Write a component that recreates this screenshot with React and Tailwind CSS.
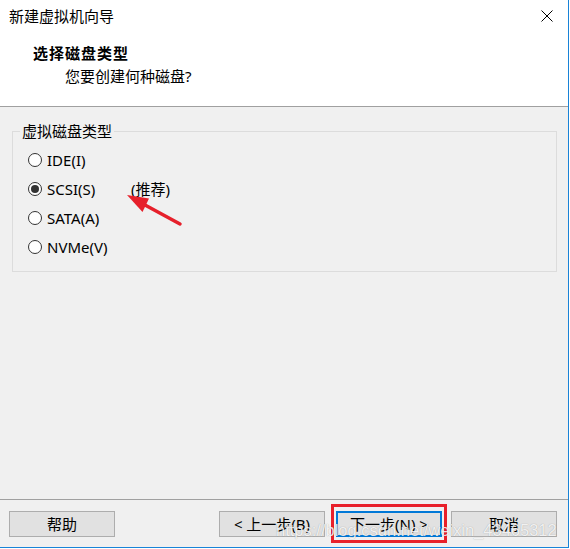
import { useState } from 'react';

const FONT = { fontFamily: '"Noto Sans", "Noto Sans CJK SC", sans-serif' };

const OPTIONS = [
  { id: 'ide', label: 'IDE(I)' },
  { id: 'scsi', label: 'SCSI(S)', note: '(推荐)' },
  { id: 'sata', label: 'SATA(A)' },
  { id: 'nvme', label: 'NVMe(V)' },
];

function Radio({ checked }) {
  return (
    <span className="flex h-[14px] w-[14px] items-center justify-center rounded-full border border-[#333] bg-white">
      {checked && <span className="h-[8px] w-[8px] rounded-full bg-[#333]" />}
    </span>
  );
}

function Button({ children, primary, className = '' }) {
  return (
    <button
      className={
        'flex h-[26px] w-[106px] items-center justify-center bg-[#e1e1e1] text-[15px] leading-none text-black ' +
        (primary ? 'border-2 border-[#0078d7] ' : 'border border-[#adadad] ') +
        className
      }
    >
      {children}
    </button>
  );
}

export default function App() {
  const [disk, setDisk] = useState('scsi');

  return (
    <div className="h-[549px] w-[570px] bg-white text-black" style={FONT}>
      <div className="relative flex h-[548px] w-[569px] flex-col border-r border-b border-[#1883d7]">
        {/* header */}
        <div className="h-[107px] border-b border-[#a0a0a0] bg-white">
          <div className="flex h-[32px] items-center justify-between pl-[9px] pr-[15px]">
            <span className="text-[15px] leading-[20px]">新建虚拟机向导</span>
            <svg width="12" height="12" viewBox="0 0 12 12" className="text-black">
              <path d="M0.5 0.5 L11.5 11.5 M11.5 0.5 L0.5 11.5" stroke="currentColor" strokeWidth="1" />
            </svg>
          </div>
          <div className="mt-[11px] pl-[33px] text-[15px] font-bold leading-[20px] tracking-[1px]">选择磁盘类型</div>
          <div className="mt-[3px] pl-[65px] text-[15px] leading-[20px]">您要创建何种磁盘?</div>
        </div>

        {/* body */}
        <div className="flex-1 bg-[#f0f0f0] pt-[15px] pl-[12px] pr-[11px]">
          <fieldset className="border border-[#dcdcdc] p-0">
            <legend className="ml-[7px] px-[2px] text-[15px] leading-[18px]">虚拟磁盘类型</legend>
            <div className="pt-[5px] pb-[10px] pl-[15px]">
              {OPTIONS.map((o) => (
                <div
                  key={o.id}
                  className="flex h-[29px] cursor-default items-center"
                  onClick={() => setDisk(o.id)}
                >
                  <Radio checked={disk === o.id} />
                  <span className="ml-[5px] w-[84px] text-[15px] leading-[20px]">{o.label}</span>
                  {o.note && <span className="text-[15px] leading-[20px]">{o.note}</span>}
                </div>
              ))}
            </div>
          </fieldset>
        </div>

        {/* footer */}
        <div className="flex h-[48px] items-start border-t border-[#a0a0a0] bg-[#f0f0f0] pt-[11px] pl-[9px] pr-[11px]">
          <Button>帮助</Button>
          <Button className="ml-auto">&lt; 上一步(B)</Button>
          <span className="relative ml-[11px]">
            <Button primary>下一步(N) &gt;</Button>
            <span className="pointer-events-none absolute -top-[7px] -bottom-[6px] -left-[5px] -right-[5px] border-[3px] border-[#e8202a]" />
          </span>
          <Button className="ml-[9px]">取消</Button>
        </div>

        {/* annotation arrow */}
        <svg className="pointer-events-none absolute top-0 left-0" width="569" height="548">
          <line x1="145" y1="205" x2="180" y2="224" stroke="#e6202b" strokeWidth="3.5" strokeLinecap="round" />
          <polygon points="127,195 149,198.5 142.5,212" fill="#e6202b" />
        </svg>

        {/* watermark */}
        <span
          className="pointer-events-none absolute top-[520px] left-[276px] text-[16.5px] leading-[20px] text-white/85 [text-shadow:0_0_1px_rgba(0,0,0,0.35)]"
          style={{ fontFamily: '"Liberation Sans", Arial, sans-serif' }}
        >
          https://blog.csdn.net/weixin_43465312
        </span>
      </div>
    </div>
  );
}
